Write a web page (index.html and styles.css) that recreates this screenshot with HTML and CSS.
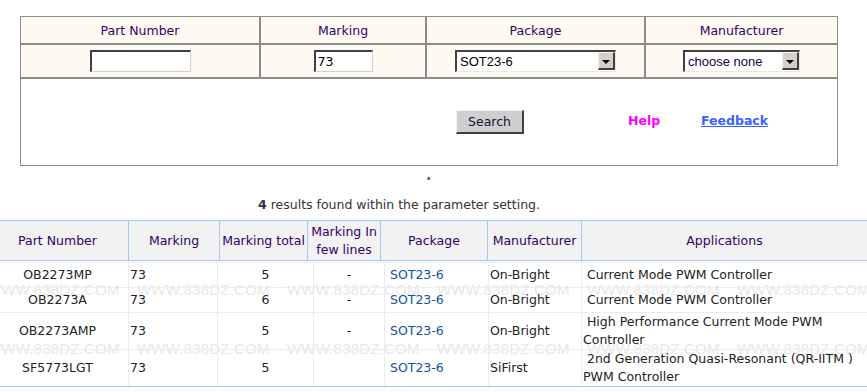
FILE: index.html
```html
<!DOCTYPE html>
<html lang="en">
<head>
  <meta charset="UTF-8" />
  <title>Marking Search</title>
  <link rel="stylesheet" href="styles.css">
</head>
<body>

  <!-- Search form -->
  <table class="search">
    <colgroup>
      <col style="width:240px">
      <col style="width:166px">
      <col style="width:219px">
      <col style="width:193px">
    </colgroup>
    <tr class="search-head">
      <td>Part Number</td>
      <td>Marking</td>
      <td>Package</td>
      <td>Manufacturer</td>
    </tr>
    <tr class="search-fields">
      <td><input type="text" class="field field-part" value=""></td>
      <td><input type="text" class="field field-mark" value="73"></td>
      <td>
        <span class="pick pick-package">
          <select><option>SOT23-6</option></select>
        </span>
      </td>
      <td>
        <span class="pick pick-maker">
          <select><option>choose none</option></select>
        </span>
      </td>
    </tr>
    <tr>
      <td colspan="4" class="actions">
        <div class="actions-row">
          <span></span>
          <button class="btn-search">Search</button>
          <a class="help" href="#">Help</a>
          <a class="feedback" href="#">Feedback</a>
        </div>
      </td>
    </tr>
  </table>

  <div class="dot-row"><span class="dot"></span></div>

  <p class="found"><b>4</b> results found within the parameter setting.</p>

  <!-- Results -->
  <div class="results">
    <table class="res-head">
      <colgroup>
        <col style="width:142px">
        <col style="width:91px">
        <col style="width:88px">
        <col style="width:73px">
        <col style="width:107px">
        <col style="width:94px">
        <col style="width:286px">
      </colgroup>
      <tr>
        <th>Part Number</th>
        <th>Marking</th>
        <th>Marking total</th>
        <th>Marking In few lines</th>
        <th>Package</th>
        <th>Manufacturer</th>
        <th>Applications</th>
      </tr>
    </table>

    <div class="res-body-wrap">
      <div class="watermark">
        <div class="wm-row"><span>WWW.838DZ.COM</span><span>WWW.838DZ.COM</span><span>WWW.838DZ.COM</span><span>WWW.838DZ.COM</span><span>WWW.838DZ.COM</span><span>WWW.838DZ.COM</span></div>
        <div class="wm-row"><span>WWW.838DZ.COM</span><span>WWW.838DZ.COM</span><span>WWW.838DZ.COM</span><span>WWW.838DZ.COM</span><span>WWW.838DZ.COM</span><span>WWW.838DZ.COM</span></div>
      </div>
      <table class="res-body">
        <colgroup>
          <col style="width:142px">
          <col style="width:89px">
          <col style="width:96px">
          <col style="width:71px">
          <col style="width:104px">
          <col style="width:93px">
          <col style="width:286px">
        </colgroup>
        <tr>
          <td class="c-part">OB2273MP</td>
          <td>73</td>
          <td class="c-mid">5</td>
          <td class="c-mid">-</td>
          <td><a href="#">&nbsp;SOT23-6</a></td>
          <td>On-Bright</td>
          <td>&nbsp;Current Mode PWM Controller</td>
        </tr>
        <tr>
          <td class="c-part">OB2273A</td>
          <td>73</td>
          <td class="c-mid">6</td>
          <td class="c-mid">-</td>
          <td><a href="#">&nbsp;SOT23-6</a></td>
          <td>On-Bright</td>
          <td>&nbsp;Current Mode PWM Controller</td>
        </tr>
        <tr>
          <td class="c-part">OB2273AMP</td>
          <td>73</td>
          <td class="c-mid">5</td>
          <td class="c-mid">-</td>
          <td><a href="#">&nbsp;SOT23-6</a></td>
          <td>On-Bright</td>
          <td>&nbsp;High Performance Current Mode PWM Controller</td>
        </tr>
        <tr class="last">
          <td class="c-part">SF5773LGT</td>
          <td>73</td>
          <td class="c-mid">5</td>
          <td class="c-mid"></td>
          <td><a href="#">&nbsp;SOT23-6</a></td>
          <td>SiFirst</td>
          <td>&nbsp;2nd Generation Quasi-Resonant (QR-IITM ) PWM Controller</td>
        </tr>
      </table>
    </div>
  </div>

</body>
</html>
```

FILE: styles.css
```css
/* Base */
body {
  margin: 0;
  background: #fff;
  font-family: 'DejaVu Sans', Verdana, sans-serif;
  font-size: 12.5px;
  color: #222;
  overflow: hidden;
}

/* Search form */
.search {
  margin: 16px 0 0 20px;
  width: 818px;
  table-layout: fixed;
  border-collapse: separate;
  border-spacing: 0;
}

.search td {
  border: 1px solid #8c8c8c;
  padding: 0;
  text-align: center;
}

.search-head td {
  height: 26px;
  background: #fffaf1;
  color: #330066;
}

.search-fields td {
  height: 32px;
  background: #fffaf1;
}

.field {
  box-sizing: border-box;
  height: 22px;
  margin: 0;
  padding: 0 2px;
  border-style: solid;
  border-width: 2px 1px 1px 2px;
  border-color: #404040 #d4d0c8 #d4d0c8 #404040;
  font-family: 'DejaVu Sans', Verdana, sans-serif;
  font-size: 12.5px;
  color: #000;
  background: #fff;
  vertical-align: middle;
}

.field-part {
  width: 101px;
}

.field-mark {
  width: 59px;
}

/* Dropdowns */
.pick {
  position: relative;
  display: inline-block;
  vertical-align: middle;
}

.pick select {
  appearance: none;
  -webkit-appearance: none;
  box-sizing: border-box;
  height: 22px;
  margin: 0;
  padding: 0 0 0 3px;
  border-style: solid;
  border-width: 2px 1px 1px 2px;
  border-color: #404040 #e8e8e8 #e8e8e8 #404040;
  border-radius: 0;
  background: #fff;
  font-family: 'Liberation Sans', Arial, sans-serif;
  font-size: 13px;
  color: #000;
  display: block;
}

.pick::after {
  content: "";
  position: absolute;
  top: 2px;
  right: 1px;
  width: 14px;
  height: 15px;
  background: #d4d0c8;
  border-style: solid;
  border-width: 1px 2px 2px 1px;
  border-color: #f4f4f4 #404040 #404040 #f4f4f4;
  box-sizing: content-box;
  pointer-events: none;
}

.pick::before {
  content: "";
  position: absolute;
  top: 10px;
  right: 6px;
  border-left: 4px solid transparent;
  border-right: 4px solid transparent;
  border-top: 4px solid #000;
  z-index: 1;
  pointer-events: none;
}

.pick-package select {
  width: 161px;
}

.pick-maker select {
  width: 117px;
  color: #220044;
}

/* Action row */
.search td.actions {
  height: 86px;
  background: #fff;
  text-align: left;
}

.actions-row {
  display: grid;
  grid-template-columns: 435px 172px 73px auto;
  align-items: center;
}

.btn-search {
  justify-self: start;
  box-sizing: border-box;
  width: 68px;
  height: 24px;
  margin: 0;
  padding: 0;
  background: #cfcfcf;
  border-style: solid;
  border-width: 1px 2px 2px 1px;
  border-color: #f2f2f2 #404040 #404040 #f2f2f2;
  font-family: 'DejaVu Sans', Verdana, sans-serif;
  font-size: 12.5px;
  color: #1a1030;
}

.help,
.feedback {
  font-weight: bold;
  margin-bottom: 3px;
}

.help {
  color: #ff00ff;
  text-decoration: none;
}

.feedback {
  color: #3a62ff;
  text-decoration: underline;
}

/* Little marker and count line */
.dot-row {
  height: 19px;
  padding-top: 11px;
}

.dot {
  display: block;
  width: 3px;
  height: 3px;
  margin-left: 427px;
  background: linear-gradient(to right, #f0a020 50%, #2a6ac0 50%);
}

.found {
  margin: 0;
  width: 798px;
  height: 18px;
  line-height: 18px;
  text-align: center;
  color: #333;
}

/* Results */
.results {
  margin-top: 6px;
  margin-left: -14px;
  width: 881px;
}

.res-head,
.res-body {
  width: 881px;
  table-layout: fixed;
  border-collapse: collapse;
}

.res-head th {
  height: 37px;
  padding: 1px;
  border: 1px solid #a8c8ef;
  background: #f2f2f2;
  font-weight: normal;
  color: #330066;
  line-height: 18px;
  text-align: center;
}

.res-body-wrap {
  position: relative;
  margin-top: 1px;
  background: #fff;
}

.watermark {
  position: absolute;
  top: 0;
  left: 0;
  right: 0;
  bottom: 0;
  overflow: hidden;
  z-index: 0;
}

.wm-row {
  position: absolute;
  left: 1px;
  white-space: nowrap;
  font-family: 'Liberation Sans', Arial, sans-serif;
  font-size: 15px;
  letter-spacing: 0.2px;
  color: #e8e8e8;
  line-height: 14px;
}

.wm-row:first-child {
  top: 21px;
}

.wm-row:last-child {
  top: 80px;
}

.wm-row span {
  display: inline-block;
  width: 150px;
}

.res-body {
  position: relative;
  z-index: 1;
}

.res-body td {
  height: 24px;
  padding: 0 1px;
  border: 1px solid #ececec;
  line-height: 18px;
  vertical-align: middle;
  color: #222;
}

.res-body tr.last td {
  height: 27px;
  border-bottom: 1px solid #a8c8ef;
}

.res-body td.c-part,
.res-body td.c-mid {
  text-align: center;
}

.res-body a {
  color: #15529f;
  text-decoration: none;
}
```
